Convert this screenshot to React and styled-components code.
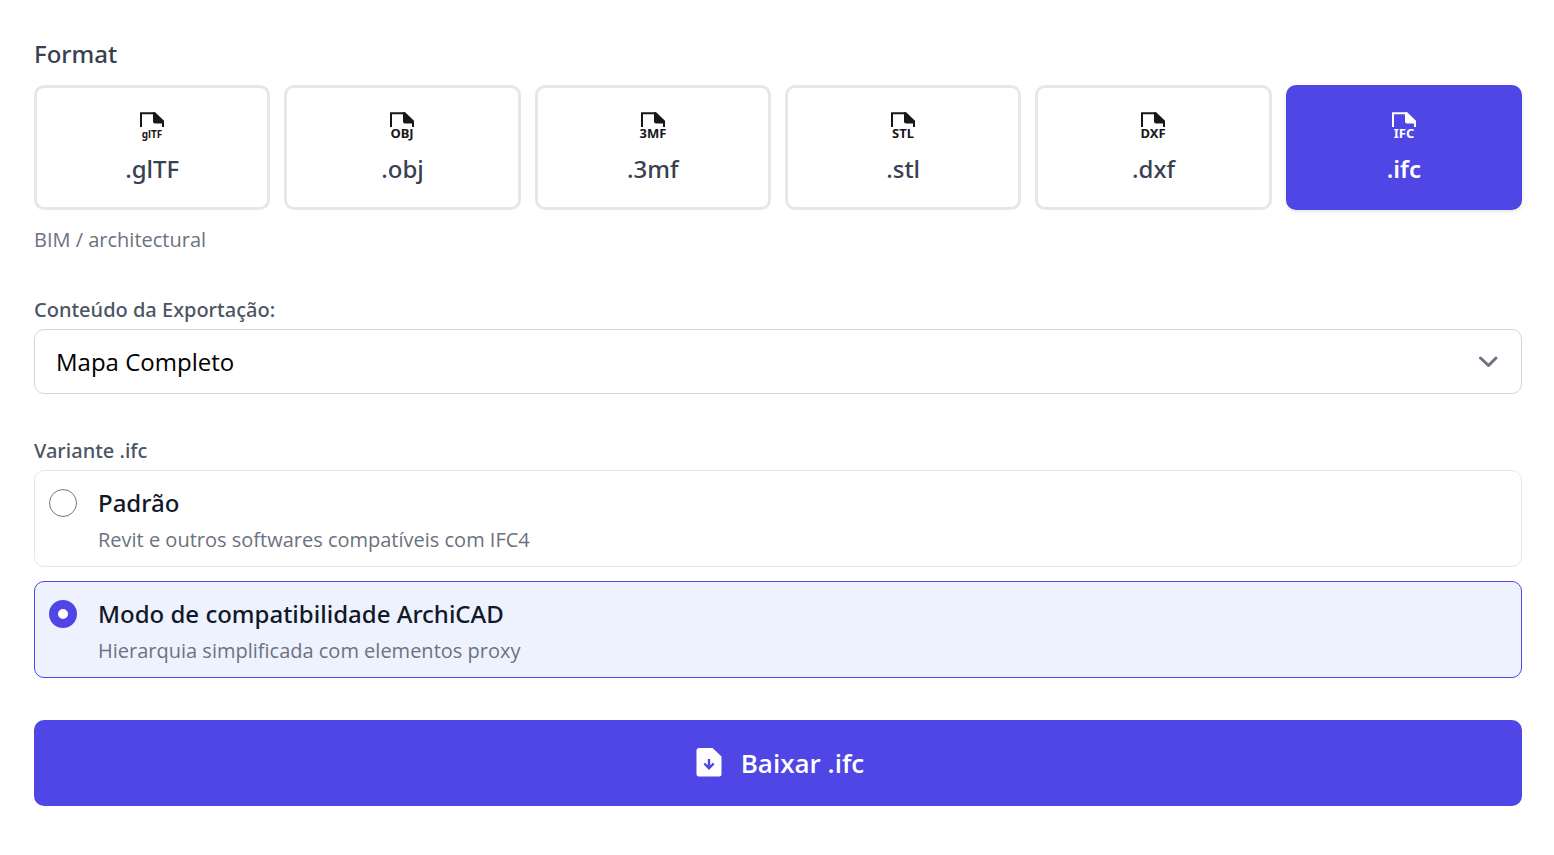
import React, { useState } from "react";
import styled, { createGlobalStyle } from "styled-components";

const regularFont = `"Open Sans", "Noto Sans", sans-serif`;
const mediumFont = `"Noto Sans", "Open Sans", sans-serif`;

const formats = [
  { id: "glTF", badge: "glTF", hint: "Web / 3D viewer" },
  { id: "obj", badge: "OBJ", hint: "Generic 3D" },
  { id: "3mf", badge: "3MF", hint: "3D printing" },
  { id: "stl", badge: "STL", hint: "3D printing" },
  { id: "dxf", badge: "DXF", hint: "CAD" },
  { id: "ifc", badge: "IFC", hint: "BIM / architectural" },
];

const variants = [
  {
    id: "standard",
    title: "Padrão",
    text: "Revit e outros softwares compatíveis com IFC4",
  },
  {
    id: "archicad",
    title: "Modo de compatibilidade ArchiCAD",
    text: "Hierarquia simplificada com elementos proxy",
  },
];

function FormatIcon({ label }) {
  return (
    <svg width="32" height="32" viewBox="0 0 32 32" aria-hidden="true">
      <path
        d="M5 17V3.2H18.5L27 11.5V17"
        fill="none"
        stroke="currentColor"
        strokeWidth="2"
      />
      <path d="M17 2.2H19L28 11V13.5H19Q17 13.5 17 11.5Z" fill="currentColor" />
      <text
        x="16"
        y="28"
        textAnchor="middle"
        fontSize={label.length > 3 ? 10 : 13}
        fontWeight="700"
        fill="currentColor"
      >
        {label}
      </text>
    </svg>
  );
}

export default function App() {
  const [format, setFormat] = useState("ifc");
  const [variant, setVariant] = useState("archicad");
  const current = formats.find((f) => f.id === format);

  return (
    <>
      <GlobalStyle />
      <Panel>
        <Heading id="format-title">Format</Heading>
        <FormatGrid role="group" aria-labelledby="format-title">
          {formats.map((f) => (
            <FormatButton
              key={f.id}
              type="button"
              $active={f.id === format}
              aria-pressed={f.id === format}
              onClick={() => setFormat(f.id)}
            >
              <FormatIcon label={f.badge} />
              <span>.{f.id}</span>
            </FormatButton>
          ))}
        </FormatGrid>
        <Hint>{current.hint}</Hint>

        <Field>
          <Label htmlFor="content">Conteúdo da Exportação:</Label>
          <SelectBox>
            <Select id="content" defaultValue="full">
              <option value="full">Mapa Completo</option>
            </Select>
            <svg width="20" height="12" viewBox="0 0 20 12" aria-hidden="true">
              <path
                d="M2.5 2L10.5 9.5L18 2"
                fill="none"
                stroke="currentColor"
                strokeWidth="3"
                strokeLinecap="round"
                strokeLinejoin="round"
              />
            </svg>
          </SelectBox>
        </Field>

        <Field role="radiogroup" aria-labelledby="variant-title">
          <Label as="div" id="variant-title">
            Variante .{format}
          </Label>
          <Options>
            {variants.map((v) => (
              <Option key={v.id} $active={v.id === variant}>
                <Radio
                  type="radio"
                  name="variant"
                  value={v.id}
                  checked={v.id === variant}
                  onChange={() => setVariant(v.id)}
                />
                <span>
                  <OptionTitle>{v.title}</OptionTitle>
                  <OptionText>{v.text}</OptionText>
                </span>
              </Option>
            ))}
          </Options>
        </Field>

        <Download type="button">
          <svg width="26" height="30" viewBox="0 0 26 30" aria-hidden="true">
            <path
              d="M3 0H16.5L25.5 8.5V26Q25.5 28.5 23 28.5H3Q.5 28.5 .5 26V2.5Q.5 0 3 0Z"
              fill="currentColor"
            />
            <path
              d="M13 11V20M8.3 15.5L13 20.2L17.7 15.5"
              fill="none"
              stroke="#4f46e5"
              strokeWidth="2.4"
            />
          </svg>
          <span>Baixar .{format}</span>
        </Download>
      </Panel>
    </>
  );
}

const GlobalStyle = createGlobalStyle`
  * {
    box-sizing: border-box;
  }
  body {
    margin: 0;
    background-color: #ffffff;
    font-family: ${regularFont};
  }
  button, select, input {
    font-family: inherit;
  }
`;

const Panel = styled.main`
  display: flex;
  flex-direction: column;
  padding: 36px 32px 48px 34px;
`;

const Heading = styled.h2`
  margin: 0 0 13px;
  font-family: ${mediumFont};
  font-size: 24px;
  line-height: 36px;
  font-weight: 500;
  color: #374151;
`;

const FormatGrid = styled.div`
  display: grid;
  grid-template-columns: repeat(6, 1fr);
  gap: 14px;
`;

const FormatButton = styled.button`
  display: flex;
  flex-direction: column;
  align-items: center;
  justify-content: center;
  gap: 9px;
  height: 125px;
  padding: 1px 0 0;
  border: 3px solid ${(p) => (p.$active ? "#4f46e5" : "#e5e7eb")};
  border-radius: 10px;
  background-color: ${(p) => (p.$active ? "#4f46e5" : "#ffffff")};
  box-shadow: ${(p) => (p.$active ? "0 2px 4px rgba(0, 0, 0, 0.1)" : "none")};
  color: ${(p) => (p.$active ? "#ffffff" : "#374151")};
  font-family: ${mediumFont};
  font-size: 24px;
  line-height: 36px;
  font-weight: ${(p) => (p.$active ? 600 : 500)};
  cursor: pointer;

  svg {
    color: ${(p) => (p.$active ? "#ffffff" : "#18181b")};
  }
`;

const Hint = styled.p`
  margin: 16px 0 0;
  font-size: 20px;
  line-height: 27px;
  color: #6b7280;
`;

const Field = styled.div`
  display: flex;
  flex-direction: column;
  gap: 5px;
  margin-top: 43px;
`;

const Label = styled.label`
  font-family: ${mediumFont};
  font-size: 20px;
  line-height: 28px;
  font-weight: 500;
  color: #4b5563;
`;

const SelectBox = styled.div`
  display: grid;
  align-items: center;
  color: #6b7280;

  select,
  svg {
    grid-area: 1 / 1;
  }
  svg {
    justify-self: end;
    margin-right: 24px;
    pointer-events: none;
  }
`;

const Select = styled.select`
  appearance: none;
  width: 100%;
  height: 65px;
  padding: 0 56px 0 21px;
  border: 1px solid #d1d5db;
  border-radius: 10px;
  background-color: #ffffff;
  color: #000000;
  font-size: 24px;
`;

const Options = styled.div`
  display: flex;
  flex-direction: column;
  gap: 14px;
`;

const Option = styled.label`
  display: flex;
  align-items: flex-start;
  gap: 21px;
  padding: 13px 14px 11px;
  border: 1px solid ${(p) => (p.$active ? "#4f46e5" : "#e5e7eb")};
  border-radius: 10px;
  background-color: ${(p) => (p.$active ? "#eef2ff" : "#ffffff")};
  cursor: pointer;
`;

const Radio = styled.input`
  appearance: none;
  flex: none;
  width: 28px;
  height: 28px;
  margin: 5px 0 0;
  border: 1px solid #767676;
  border-radius: 50%;
  background-color: #ffffff;

  &:checked {
    border: 9px solid #4f46e5;
  }
`;

const OptionTitle = styled.span`
  display: block;
  font-family: ${mediumFont};
  font-size: 24px;
  line-height: 38px;
  font-weight: 500;
  color: #111827;
`;

const OptionText = styled.span`
  display: block;
  margin-top: 2px;
  font-size: 20px;
  line-height: 31px;
  color: #6b7280;
`;

const Download = styled.button`
  display: flex;
  align-items: center;
  justify-content: center;
  gap: 19px;
  height: 86px;
  margin-top: 42px;
  padding: 0 0 0 4px;
  border: 0;
  border-radius: 10px;
  background-color: #4f46e5;
  color: #ffffff;
  font-size: 26px;
  font-weight: 600;
  cursor: pointer;
`;
